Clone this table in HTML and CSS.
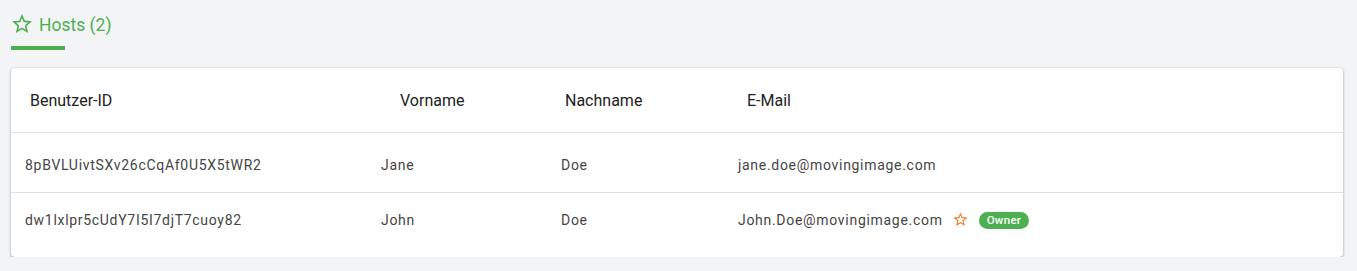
FILE: index.html
```html
<!DOCTYPE html>
<html lang="de">
<head>
<meta charset="utf-8">
<link rel="stylesheet" href="styles.css">
</head>
<body>
<div class="tabs">
  <div class="tab">
    <div class="tab-label">
      <svg class="tab-icon" viewBox="0 0 24 24" width="24" height="24"><path fill="#4caf50" d="M22 9.24l-7.19-.62L12 2 9.19 8.63 2 9.24l5.46 4.73L5.82 21 12 17.27 18.18 21l-1.63-7.03L22 9.24zM12 15.4l-3.76 2.27 1-4.28-3.32-2.88 4.38-.38L12 6.1l1.71 4.04 4.38.38-3.32 2.88 1 4.28L12 15.4z"/></svg>
      <span>Hosts (2)</span>
    </div>
    <div class="tab-bar"></div>
  </div>
</div>
<div class="card">
  <div class="thead">
    <div>Benutzer-ID</div>
    <div>Vorname</div>
    <div>Nachname</div>
    <div>E-Mail</div>
  </div>
  <div class="row row-first">
    <div>8pBVLUivtSXv26cCqAf0U5X5tWR2</div>
    <div>Jane</div>
    <div>Doe</div>
    <div>jane.doe@movingimage.com</div>
  </div>
  <div class="row row-last">
    <div>dw1lxlpr5cUdY7I5I7djT7cuoy82</div>
    <div>John</div>
    <div>Doe</div>
    <div class="mail">
      <span>John.Doe@movingimage.com</span>
      <svg class="owner-star" viewBox="0 0 24 24" width="17" height="17"><path fill="#f07b2a" d="M22 9.24l-7.19-.62L12 2 9.19 8.63 2 9.24l5.46 4.73L5.82 21 12 17.27 18.18 21l-1.63-7.03L22 9.24zM12 15.4l-3.76 2.27 1-4.28-3.32-2.88 4.38-.38L12 6.1l1.71 4.04 4.38.38-3.32 2.88 1 4.28L12 15.4z"/></svg>
      <span class="badge">Owner</span>
    </div>
  </div>
</div>
</body>
</html>
```
FILE: styles.css
```css
html, body {
  margin: 0;
  padding: 0;
  background: #f3f4f6;
  font-family: Roboto, "Liberation Sans", sans-serif;
}

.tabs {
  display: flex;
  padding: 10px 0 0 11px;
  height: 40px;
}

.tab {
  display: flex;
  flex-direction: column;
}

.tab-label {
  display: flex;
  align-items: center;
  gap: 5px;
  margin-left: -1px;
  color: #4caf50;
  font-size: 17.5px;
  height: 30px;
}

.tab-icon {
  display: block;
  margin-top: -2px;
}

.tab-bar {
  width: 54px;
  height: 4px;
  margin-top: 6px;
  background: #4caf50;
}

.card {
  margin: 18px 14px 0 11px;
  background: #fff;
  border-radius: 4px;
  box-shadow: 0 1px 3px rgba(0, 0, 0, 0.35), 0 0 1px rgba(0, 0, 0, 0.12);
}

.thead {
  display: grid;
  grid-template-columns: 370px 165px 182px 1fr;
  padding-left: 19px;
  height: 64px;
  align-items: center;
  font-size: 16px;
  color: #222;
  border-bottom: 1px solid #e0e0e0;
}

.row {
  display: grid;
  grid-template-columns: 356px 180px 177px 1fr;
  align-items: start;
  padding-left: 14px;
  font-size: 14px;
  line-height: 20px;
  letter-spacing: 0.7px;
  color: #454545;
  box-sizing: border-box;
}

.row-first {
  height: 60px;
  padding-top: 22px;
  border-bottom: 1px solid #e0e0e0;
}

.row-last {
  height: 64px;
  padding-top: 17px;
}

.mail {
  display: flex;
  align-items: center;
  height: 20px;
}

.owner-star {
  display: block;
  margin-left: 9px;
  margin-top: -1px;
}

.badge {
  margin-left: 10px;
  background: #4caf50;
  color: #fff;
  font-size: 11.5px;
  font-weight: 500;
  letter-spacing: 0.3px;
  line-height: 17px;
  height: 17px;
  padding: 0 8px;
  border-radius: 9px;
}
```
